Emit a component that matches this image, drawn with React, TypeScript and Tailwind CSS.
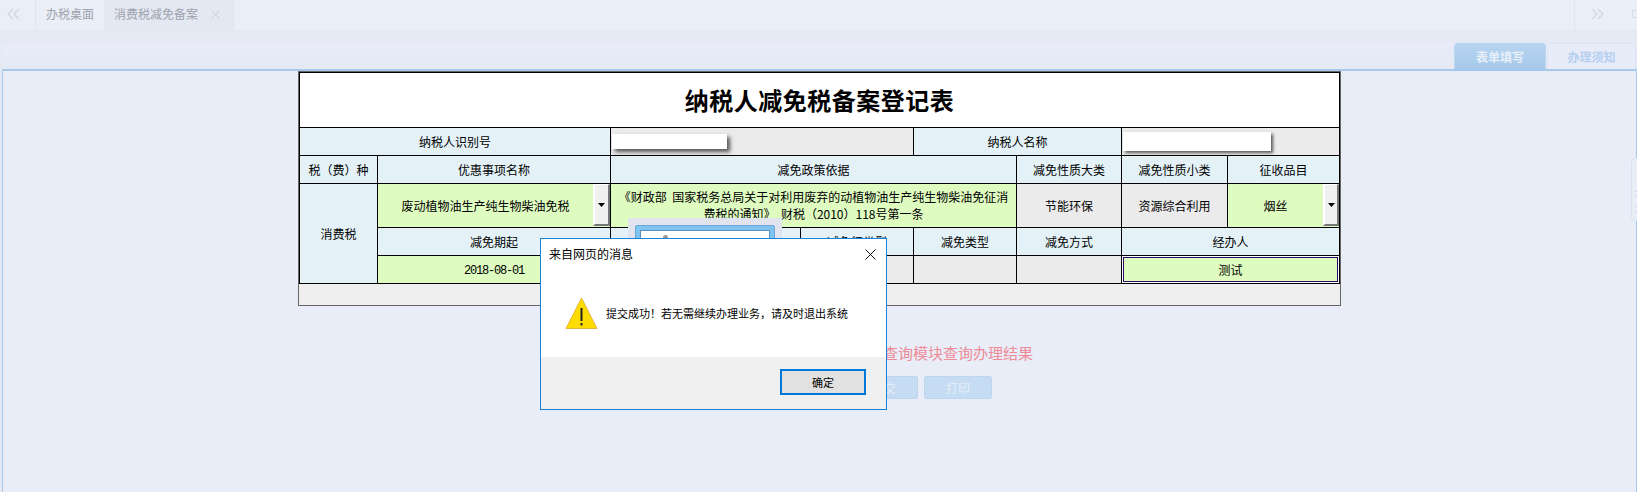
const CELL = "border border-black text-center align-middle p-0"
const LABEL = `${CELL} bg-[#e4f2f8]`
const GREY = `${CELL} bg-[#ebebeb]`
const GREEN = `${CELL} bg-[#dffcc0]`

const Chevrons = ({ flip }: { flip?: boolean }) => (
    <svg width="13" height="12" viewBox="0 0 13 12" fill="none" stroke="#d3d7e1" strokeWidth="1.4" className={flip ? "rotate-180" : ""}>
        <path d="M6 1 1 6l5 5M12 1 7 6l5 5" />
    </svg>
)

const SelectCell = ({ text, btn }: { text: string; btn: string }) => (
    <div className="flex h-[43px] items-stretch">
        <div className="flex-1 flex items-center justify-center">{text}</div>
        <div className={`${btn} flex items-center justify-center bg-[#f0f0f0] border-t border-l-2 border-white border-r-2 border-b-2 border-r-[#777] border-b-[#777] mb-px`}>
            <svg width="7" height="4" viewBox="0 0 7 4"><path d="M0 0h7L3.5 4z" fill="#000" /></svg>
        </div>
    </div>
)

const FormTable = () => (
    <table className="w-[1041px] table-fixed border-collapse text-[12px] leading-[16px] text-black">
        <colgroup>
            <col className="w-[78px]" />
            <col className="w-[233px]" />
            <col className="w-[190px]" />
            <col className="w-[113px]" />
            <col className="w-[103px]" />
            <col className="w-[105px]" />
            <col className="w-[106px]" />
            <col className="w-[112px]" />
        </colgroup>
        <tbody>
            <tr className="h-[55px]">
                <td colSpan={8} className={`${CELL} bg-white text-[24px] font-bold tracking-[0.5px]`}>纳税人减免税备案登记表</td>
            </tr>
            <tr className="h-[28px]">
                <td colSpan={2} className={LABEL}>纳税人识别号</td>
                <td colSpan={2} className={GREY}>
                    <div className="ml-[1px] w-[115px] h-[15px] bg-white shadow-[3px_3px_4px_#555]" />
                </td>
                <td colSpan={2} className={LABEL}>纳税人名称</td>
                <td colSpan={2} className={GREY}>
                    <div className="ml-[1px] w-[148px] h-[19px] bg-white shadow-[2px_2px_3px_#555]" />
                </td>
            </tr>
            <tr className="h-[28px]">
                <td className={LABEL}>税（费）种</td>
                <td className={LABEL}>优惠事项名称</td>
                <td colSpan={3} className={LABEL}>减免政策依据</td>
                <td className={LABEL}>减免性质大类</td>
                <td className={LABEL}>减免性质小类</td>
                <td className={LABEL}>征收品目</td>
            </tr>
            <tr className="h-[44px]">
                <td rowSpan={3} className={LABEL}>消费税</td>
                <td className={GREEN}><SelectCell text="废动植物油生产纯生物柴油免税" btn="w-[17px]" /></td>
                <td colSpan={3} className={GREEN}>
                    <div className="px-[5px] pb-[1px] leading-[17px]">《财政部&nbsp;&nbsp;国家税务总局关于对利用废弃的动植物油生产纯生物柴油免征消费税的通知》&nbsp;&nbsp;财税（2010）118号第一条</div>
                </td>
                <td className={GREY}>节能环保</td>
                <td className={GREY}>资源综合利用</td>
                <td className={GREEN}><SelectCell text="烟丝" btn="w-[16px]" /></td>
            </tr>
            <tr className="h-[28px]">
                <td className={LABEL}>减免期起</td>
                <td className={LABEL}>减免期止</td>
                <td className={LABEL}>减免征类型</td>
                <td className={LABEL}>减免类型</td>
                <td className={LABEL}>减免方式</td>
                <td colSpan={2} className={LABEL}>经办人</td>
            </tr>
            <tr className="h-[28px]">
                <td className={GREEN}><span className="font-['Liberation_Mono'] tracking-[-1.2px]">2018-08-01</span></td>
                <td className={GREY}></td>
                <td className={GREY}></td>
                <td className={GREY}></td>
                <td className={GREY}></td>
                <td colSpan={2} className={GREEN}>
                    <div className="h-[27px] flex items-center justify-center shadow-[inset_0_0_0_1px_#fff,inset_0_0_0_2px_#2a0a66]">测试</div>
                </td>
            </tr>
        </tbody>
    </table>
)

const MessageBox = () => (
    <div className="absolute left-[540px] top-[238px] w-[347px] h-[172px] flex flex-col bg-white border border-[#1883d7] text-black">
        <div className="h-[30px] flex items-center justify-between pl-[8px] pr-[10px] text-[12px]">
            <span>来自网页的消息</span>
            <svg width="11" height="11" viewBox="0 0 11 11" stroke="#111" strokeWidth="1"><path d="M.5.5l10 10M10.5.5l-10 10" /></svg>
        </div>
        <div className="flex-1 flex items-center pl-[24px] gap-[8px] text-[11px]">
            <svg width="33" height="32" viewBox="0 0 33 32">
                <path d="M16.5 1 32 31.5H1z" fill="#ffdc00" stroke="#e3b53a" strokeWidth="1" />
                <path d="M15.5 11h2v13h-2zM15.5 26h2v2.500h-2z" fill="#222" />
            </svg>
            <span>提交成功！若无需继续办理业务，请及时退出系统</span>
        </div>
        <div className="h-[52px] flex justify-end items-start pt-[12px] pr-[20px] bg-[#f0f0f0]">
            <button className="w-[86px] h-[26px] border-2 border-[#0078d7] bg-[#e1e1e1] text-[11px] text-black">确定</button>
        </div>
    </div>
)

const App = () => {
    return (
        <div className="relative h-[492px] w-[1637px] overflow-hidden flex flex-col bg-[#e5e9f4] font-['Noto_Sans_CJK_SC','Liberation_Sans',sans-serif]">
            {/* top tabs */}
            <header className="h-[30px] flex bg-[#eaeef7] text-[12px] text-[#9ea3ad]">
                <div className="w-[36px] flex items-center pl-[7px] pb-[2px] border-r border-[#e0e4ee]"><Chevrons /></div>
                <div className="w-[68px] flex items-center justify-center pb-[2px]">办税桌面</div>
                <div className="w-[130px] flex items-center pl-[10px] gap-[13px] pb-[2px] bg-[#e4e8f3] border-r border-[#e0e4ee]">
                    消费税减免备案
                    <svg width="9" height="9" viewBox="0 0 9 9" stroke="#c9cdd7"><path d="M.5.500l8 8M8.500.500l-8 8" /></svg>
                </div>
                <div className="flex-1" />
                <div className="w-[63px] flex items-center justify-between pl-[16px] pb-[2px] border-l border-[#e0e4ee]">
                    <Chevrons flip />
                    <div className="w-[5px] h-[8px] border-l border-y border-[#d9dde6] mr-0" />
                </div>
            </header>
            <div className="h-[13px]" />

            {/* panel tabs */}
            <div className="h-[27px] -mb-px flex justify-end items-end gap-px pr-px bg-gradient-to-b from-[#e9ecf8] to-[#e4e9f4] ml-[2px] text-[12px] font-bold">
                <div className="w-[92px] h-[27px] flex items-center justify-center rounded-t-[3px] border border-[#bcd6f0] bg-gradient-to-b from-[#b7d5f1] to-[#a7c8ea] text-[#e8f0f9]">表单填写</div>
                <div className="w-[89px] h-[27px] flex items-center justify-center rounded-t-[3px] border border-[#dde3f2] bg-[#e8ecf8] text-[#b5cff0]">办理须知</div>
            </div>

            {/* form panel */}
            <main className="flex-1 ml-[2px] mr-0 border-x border-t-2 border-[#a6c8ea] border-b-0 bg-[#e9edf7]">
                <div className="w-[1043px] h-[235px] mx-auto border border-[#666] bg-[#efefef]">
                    <FormTable />
                </div>
                <div className="w-[1043px] mx-auto mt-[36px] pr-[308px] text-right text-[15px] leading-[22px] text-[#ee8b97]">查询模块查询办理结果</div>
                <div className="w-[1043px] mx-auto mt-[12px] pr-[349px] flex justify-end gap-[6px] text-[12px] text-[#e4eef9]">
                    <div className="w-[68px] h-[23px] flex items-center justify-center rounded-[2px] bg-[#c6dcf3] border border-[#bdd5ef]">提交</div>
                    <div className="w-[68px] h-[23px] flex items-center justify-center rounded-[2px] bg-[#c6dcf3] border border-[#bdd5ef]">打印</div>
                </div>
            </main>

            {/* side handle */}
            <div className="absolute right-0 top-[158px] w-[6px] h-[63px] pt-[32px] pl-[4px] flex flex-col gap-[4px] rounded-l-[4px] border border-r-0 border-[#dde3f1] bg-[#e9edf7]">
                <span className="h-px bg-[#a6c8ea]" />
                <span className="h-px bg-[#a6c8ea]" />
                <span className="h-px mt-[5px] bg-[#a6c8ea]" />
                <span className="h-px bg-[#a6c8ea]" />
            </div>

            {/* popup behind the alert */}
            <div className="absolute left-[628px] top-[218px] w-[154px] h-[60px] p-[7px] bg-[#e1e4ee]">
                <div className="h-full p-[4px] pb-0 rounded-t-[2px] bg-[#7fc3f0] border border-[#6fa8d8]">
                    <div className="h-full pl-[22px] pt-[4px] bg-white border border-[#5a8fc0]">
                        <div className="w-[5px] h-[5px] rounded-full bg-[#999]" />
                    </div>
                </div>
            </div>

            <MessageBox />
        </div>
    )
}

export default App
